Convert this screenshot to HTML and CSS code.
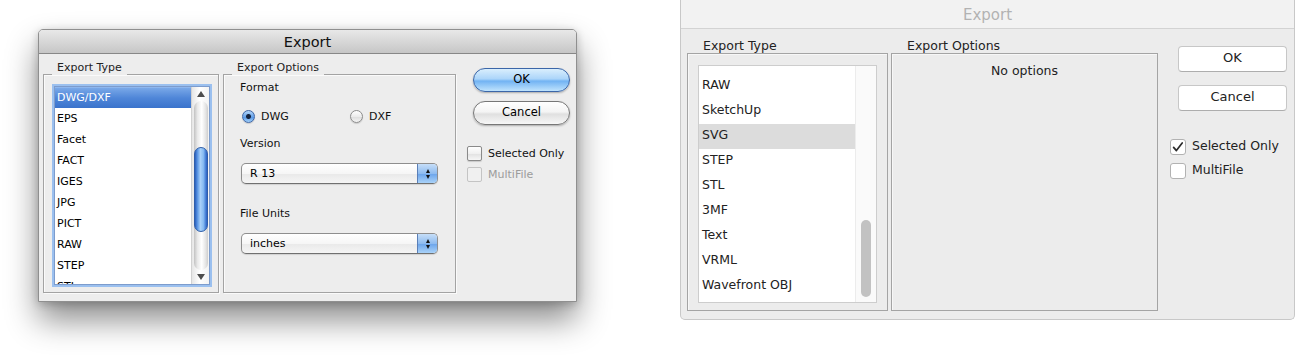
FILE: index.html
```html
<!DOCTYPE html>
<html>
<head>
<meta charset="utf-8">
<title>Export dialogs</title>
<link rel="stylesheet" href="styles.css">
</head>
<body>
<div class="stage">
  <div class="aqua">
    <div class="aq-title">Export</div>
    <div class="aq-body">
      <div class="aq-group aq-type">
        <div class="aq-legend">Export Type</div>
        <div class="aq-list">
          <div class="aq-rows">
            <div class="aq-row sel">DWG/DXF</div>
            <div class="aq-row">EPS</div>
            <div class="aq-row">Facet</div>
            <div class="aq-row">FACT</div>
            <div class="aq-row">IGES</div>
            <div class="aq-row">JPG</div>
            <div class="aq-row">PICT</div>
            <div class="aq-row">RAW</div>
            <div class="aq-row">STEP</div>
            <div class="aq-row">STL</div>
          </div>
          <div class="aq-scroll">
            <div class="aq-arr"><span class="tri-up"></span></div>
            <div class="aq-track"><div class="aq-thumb"></div></div>
            <div class="aq-arr"><span class="tri-down"></span></div>
          </div>
        </div>
      </div>
      <div class="aq-group aq-opts">
        <div class="aq-legend">Export Options</div>
        <div class="aq-optbody">
          <div class="aq-lbl l-format">Format</div>
          <div class="aq-radios">
            <div class="aq-radio-item"><span class="aq-radio on"></span><span>DWG</span></div>
            <div class="aq-radio-item"><span class="aq-radio"></span><span>DXF</span></div>
          </div>
          <div class="aq-lbl l-version">Version</div>
          <div class="aq-pop">
            <div class="aq-pop-text">R 13</div>
            <div class="aq-step"><span class="s-up"></span><span class="s-down"></span></div>
          </div>
          <div class="aq-lbl l-units">File Units</div>
          <div class="aq-pop">
            <div class="aq-pop-text">inches</div>
            <div class="aq-step"><span class="s-up"></span><span class="s-down"></span></div>
          </div>
        </div>
      </div>
      <div class="aq-side">
        <div class="aq-btn def">OK</div>
        <div class="aq-btn cancel">Cancel</div>
        <div class="aq-chk-row first"><span class="aq-chk"></span><span>Selected Only</span></div>
        <div class="aq-chk-row dis"><span class="aq-chk"></span><span>MultiFile</span></div>
      </div>
    </div>
  </div>

  <div class="yos">
    <div class="yos-title">Export</div>
    <div class="yos-body">
      <div class="yos-col yos-type">
        <div class="yos-label">Export Type</div>
        <div class="yos-box">
          <div class="yos-list">
            <div class="yos-rows">
              <div class="yos-row">RAW</div>
              <div class="yos-row">SketchUp</div>
              <div class="yos-row sel">SVG</div>
              <div class="yos-row">STEP</div>
              <div class="yos-row">STL</div>
              <div class="yos-row">3MF</div>
              <div class="yos-row">Text</div>
              <div class="yos-row">VRML</div>
              <div class="yos-row">Wavefront OBJ</div>
            </div>
            <div class="yos-scroll"><div class="yos-thumb"></div></div>
          </div>
        </div>
      </div>
      <div class="yos-col yos-opts">
        <div class="yos-label">Export Options</div>
        <div class="yos-box">
          <div class="yos-noopt">No options</div>
        </div>
      </div>
      <div class="yos-side">
        <div class="yos-btn">OK</div>
        <div class="yos-btn cancel">Cancel</div>
        <div class="yos-chk-row first">
          <span class="yos-chk"><svg width="14" height="14" viewBox="0 0 14 14"><path d="M2.6 7.4 L5.4 10.6 L11.2 3" fill="none" stroke="#2b2b2b" stroke-width="1.7" stroke-linecap="round" stroke-linejoin="round"/></svg></span>
          <span class="yos-chk-text">Selected Only</span>
        </div>
        <div class="yos-chk-row second"><span class="yos-chk"></span><span class="yos-chk-text">MultiFile</span></div>
      </div>
    </div>
  </div>
</div>
</body>
</html>
```
FILE: styles.css
```css
* { box-sizing: border-box; }
html, body { margin: 0; padding: 0; background: #ffffff; }
body { font-family: "DejaVu Sans", "Liberation Sans", sans-serif; }

.stage {
  display: flex;
  align-items: flex-start;
  padding-left: 38px;
  height: 355px;
  overflow: hidden;
}

/* ---------- Aqua dialog ---------- */
.aqua {
  width: 539px;
  height: 273px;
  margin-top: 29px;
  background: #ededed;
  border: 1px solid #8f8f8f;
  border-radius: 5px 5px 0 0;
  box-shadow: 0 18px 32px rgba(0,0,0,0.45), 0 2px 8px rgba(0,0,0,0.2);
  font-size: 11px;
  color: #111;
  display: flex;
  flex-direction: column;
}
.aq-title {
  height: 24px;
  border-bottom: 1px solid #878787;
  border-radius: 4px 4px 0 0;
  background: linear-gradient(#e8e8e8, #d4d4d4 60%, #c6c6c6);
  text-align: center;
  font-size: 14.5px;
  line-height: 24px;
  color: #111;
}
.aq-body {
  display: flex;
  align-items: flex-start;
  padding-left: 4px;
}
.aq-group {
  margin-top: 20px;
  height: 219px;
  border: 1px solid #a3a3a3;
  box-shadow: inset 1px 1px 0 #fafafa, 1px 1px 0 #fafafa;
}
.aq-type { width: 176px; }
.aq-opts { width: 233px; margin-left: 4px; }
.aq-legend {
  margin: -14px 0 0 8px;
  padding: 0 5px;
  height: 14px;
  line-height: 14px;
  width: max-content;
  background: #ededed;
  color: #222;
}

.aq-list {
  margin: 11px 0 0 10px;
  width: 156px;
  height: 199px;
  border: 1px solid #7d9ccc;
  box-shadow: 0 0 0 2px #9bc0ef;
  background: #ffffff;
  display: flex;
}
.aq-rows { flex: 1; overflow: hidden; }
.aq-row {
  height: 21px;
  line-height: 21px;
  padding-left: 2px;
  white-space: nowrap;
  color: #000;
}
.aq-row.sel {
  background: linear-gradient(#79a8e8, #4f86d8 50%, #3a73cc);
  border-top: 1px solid #8db6ee;
  line-height: 19px;
  color: #ffffff;
}
.aq-scroll {
  width: 18px;
  display: flex;
  flex-direction: column;
  align-items: center;
  background: linear-gradient(to right, #e6e6e6, #ffffff 45%, #f3f3f3);
  border-left: 1px solid #d2d2d2;
}
.aq-arr {
  height: 14px;
  width: 100%;
  display: flex;
  align-items: center;
  justify-content: center;
}
.tri-up {
  width: 0; height: 0;
  border-left: 4px solid transparent;
  border-right: 4px solid transparent;
  border-bottom: 6px solid #4d4d4d;
}
.tri-down {
  width: 0; height: 0;
  border-left: 4px solid transparent;
  border-right: 4px solid transparent;
  border-top: 6px solid #4d4d4d;
}
.aq-track {
  flex: 1;
  width: 14px;
  border-radius: 7px;
  padding-top: 46px;
  background: linear-gradient(to right, #c2c2c2, #e9e9e9 25%, #ffffff 55%, #e3e3e3 85%, #cdcdcd);
}
.aq-thumb {
  height: 85px;
  border-radius: 7px;
  border: 1px solid #2f5ea9;
  background: linear-gradient(to right, #2a5fbd, #5f9ae6 22%, #a9d1f9 45%, #86bbf2 70%, #3d77d3 92%, #2a5fbd);
}

.aq-optbody {
  padding-left: 16px;
  display: flex;
  flex-direction: column;
  align-items: flex-start;
}
.aq-lbl { line-height: 14px; color: #111; }
.l-format { margin-top: 6px; }
.l-version { margin-top: 13px; }
.l-units { margin-top: 23px; }
.aq-radios {
  display: flex;
  margin-top: 14px;
  height: 15px;
}
.aq-radio-item {
  display: flex;
  align-items: center;
  gap: 6px;
  width: 108px;
  padding-left: 2px;
}
.aq-radio {
  width: 13px;
  height: 13px;
  border-radius: 50%;
  border: 1px solid #8c8c8c;
  background: linear-gradient(#ffffff, #ececec 50%, #dcdcdc 51%, #f4f4f4);
  box-shadow: 0 1px 1px rgba(0,0,0,0.15);
}
.aq-radio.on {
  border-color: #3f66a6;
  background:
    radial-gradient(circle at 50% 50%, #15233d 0, #15233d 2px, rgba(21,35,61,0) 3px),
    linear-gradient(#b4d6f8, #6aa5ea 50%, #4f91e4 51%, #a3d0f8);
}
.aq-pop {
  margin-top: 12px;
  margin-left: 1px;
  width: 197px;
  height: 21px;
  display: flex;
  border: 1px solid #8e8e8e;
  border-bottom-color: #707070;
  border-radius: 5px;
  overflow: hidden;
  background: linear-gradient(#ffffff, #f6f6f6 50%, #e9e9e9 51%, #f5f5f5);
  box-shadow: 0 1px 1px rgba(0,0,0,0.12);
}
.aq-pop-text {
  flex: 1;
  padding-left: 8px;
  line-height: 19px;
  color: #000;
}
.aq-step {
  width: 20px;
  border-left: 1px solid #5a7fb8;
  background: linear-gradient(#c6def8, #8ebbef 50%, #6aa3ea 51%, #a9d2f8);
  display: flex;
  flex-direction: column;
  align-items: center;
  justify-content: center;
  gap: 2px;
}
.s-up {
  width: 0; height: 0;
  border-left: 2.5px solid transparent;
  border-right: 2.5px solid transparent;
  border-bottom: 4px solid #111;
}
.s-down {
  width: 0; height: 0;
  border-left: 2.5px solid transparent;
  border-right: 2.5px solid transparent;
  border-top: 4px solid #111;
}

.aq-side {
  margin-left: 11px;
  margin-top: 14px;
  display: flex;
  flex-direction: column;
  align-items: flex-start;
}
.aq-btn {
  margin-left: 6px;
  width: 97px;
  height: 24px;
  border-radius: 12px;
  border: 1px solid #777;
  background: linear-gradient(#ffffff, #f4f4f4 45%, #e0e0e0 55%, #f7f7f7);
  box-shadow: 0 1px 2px rgba(0,0,0,0.28);
  text-align: center;
  line-height: 21px;
  font-size: 11.5px;
  color: #000;
}
.aq-btn.def {
  border-color: #3b66a8;
  background: linear-gradient(#d9eefd, #acd5fa 45%, #72b3f3 55%, #bfe3fd);
}
.aq-btn.cancel { margin-top: 9px; }
.aq-chk-row {
  display: flex;
  align-items: center;
  gap: 6px;
  height: 15px;
}
.aq-chk-row.first { margin-top: 21px; }
.aq-chk-row.dis { margin-top: 6px; color: #9c9c9c; }
.aq-chk {
  width: 15px;
  height: 15px;
  border-radius: 2px;
  border: 1px solid #8a8a8a;
  background: linear-gradient(#ffffff, #f0f0f0 50%, #e1e1e1 51%, #f6f6f6);
  box-shadow: 0 1px 1px rgba(0,0,0,0.15);
}
.aq-chk-row.dis .aq-chk {
  border-color: #c4c4c4;
  background: #f0f0f0;
  box-shadow: none;
}

/* ---------- Yosemite dialog ---------- */
.yos {
  margin-left: 103px;
  width: 615px;
  height: 320px;
  background: #ececec;
  border: 1px solid #c8c8c8;
  border-top: none;
  border-radius: 0 0 5px 5px;
  font-size: 12.5px;
  color: #1e1e1e;
  display: flex;
  flex-direction: column;
}
.yos-title {
  height: 29px;
  border-bottom: 1px solid #d3d3d3;
  background: #f2f2f2;
  text-align: center;
  font-size: 15px;
  line-height: 30px;
  color: #b2b2b2;
}
.yos-body {
  display: flex;
  align-items: flex-start;
  padding-left: 6px;
}
.yos-col { display: flex; flex-direction: column; }
.yos-type { width: 201px; }
.yos-opts { width: 267px; margin-left: 3px; }
.yos-label {
  margin-top: 9px;
  padding-left: 16px;
  line-height: 15px;
  height: 15px;
  color: #222;
}
.yos-box {
  height: 258px;
  border: 1px solid #a4a4a4;
  box-shadow: inset 1px 1px 0 #f7f7f7;
}
.yos-list {
  margin: 11px 0 0 10px;
  width: 179px;
  height: 238px;
  border: 1px solid #cdcdcd;
  background: #ffffff;
  display: flex;
}
.yos-rows { flex: 1; padding-top: 8px; overflow: hidden; }
.yos-row {
  height: 25px;
  line-height: 21px;
  padding-left: 3px;
  white-space: nowrap;
  color: #222;
}
.yos-row.sel { background: #dcdcdc; }
.yos-scroll {
  width: 21px;
  background: #fafafa;
  border-left: 1px solid #ececec;
  padding: 154px 0 0 5px;
}
.yos-thumb {
  width: 10px;
  height: 77px;
  border-radius: 5px;
  background: #c2c2c2;
}
.yos-noopt {
  text-align: center;
  padding-top: 9px;
  line-height: 15px;
  color: #222;
}
.yos-side {
  margin-left: 12px;
  margin-top: 17px;
  display: flex;
  flex-direction: column;
  align-items: flex-start;
}
.yos-btn {
  margin-left: 8px;
  width: 109px;
  height: 26px;
  border: 1px solid #c7c7c7;
  border-bottom-color: #adadad;
  border-radius: 4px;
  background: #ffffff;
  text-align: center;
  line-height: 22px;
  font-size: 13px;
  color: #222;
}
.yos-btn.cancel { margin-top: 13px; }
.yos-chk-row {
  display: flex;
  align-items: center;
  gap: 6px;
  height: 16px;
  color: #222;
}
.yos-chk-text { line-height: 13px; padding-bottom: 3px; }
.yos-chk-row.first { margin-top: 28px; }
.yos-chk-row.second { margin-top: 8px; }
.yos-chk {
  width: 16px;
  height: 16px;
  border: 1px solid #b2b2b2;
  border-radius: 3px;
  background: #ffffff;
  display: flex;
  align-items: center;
  justify-content: center;
}
```
